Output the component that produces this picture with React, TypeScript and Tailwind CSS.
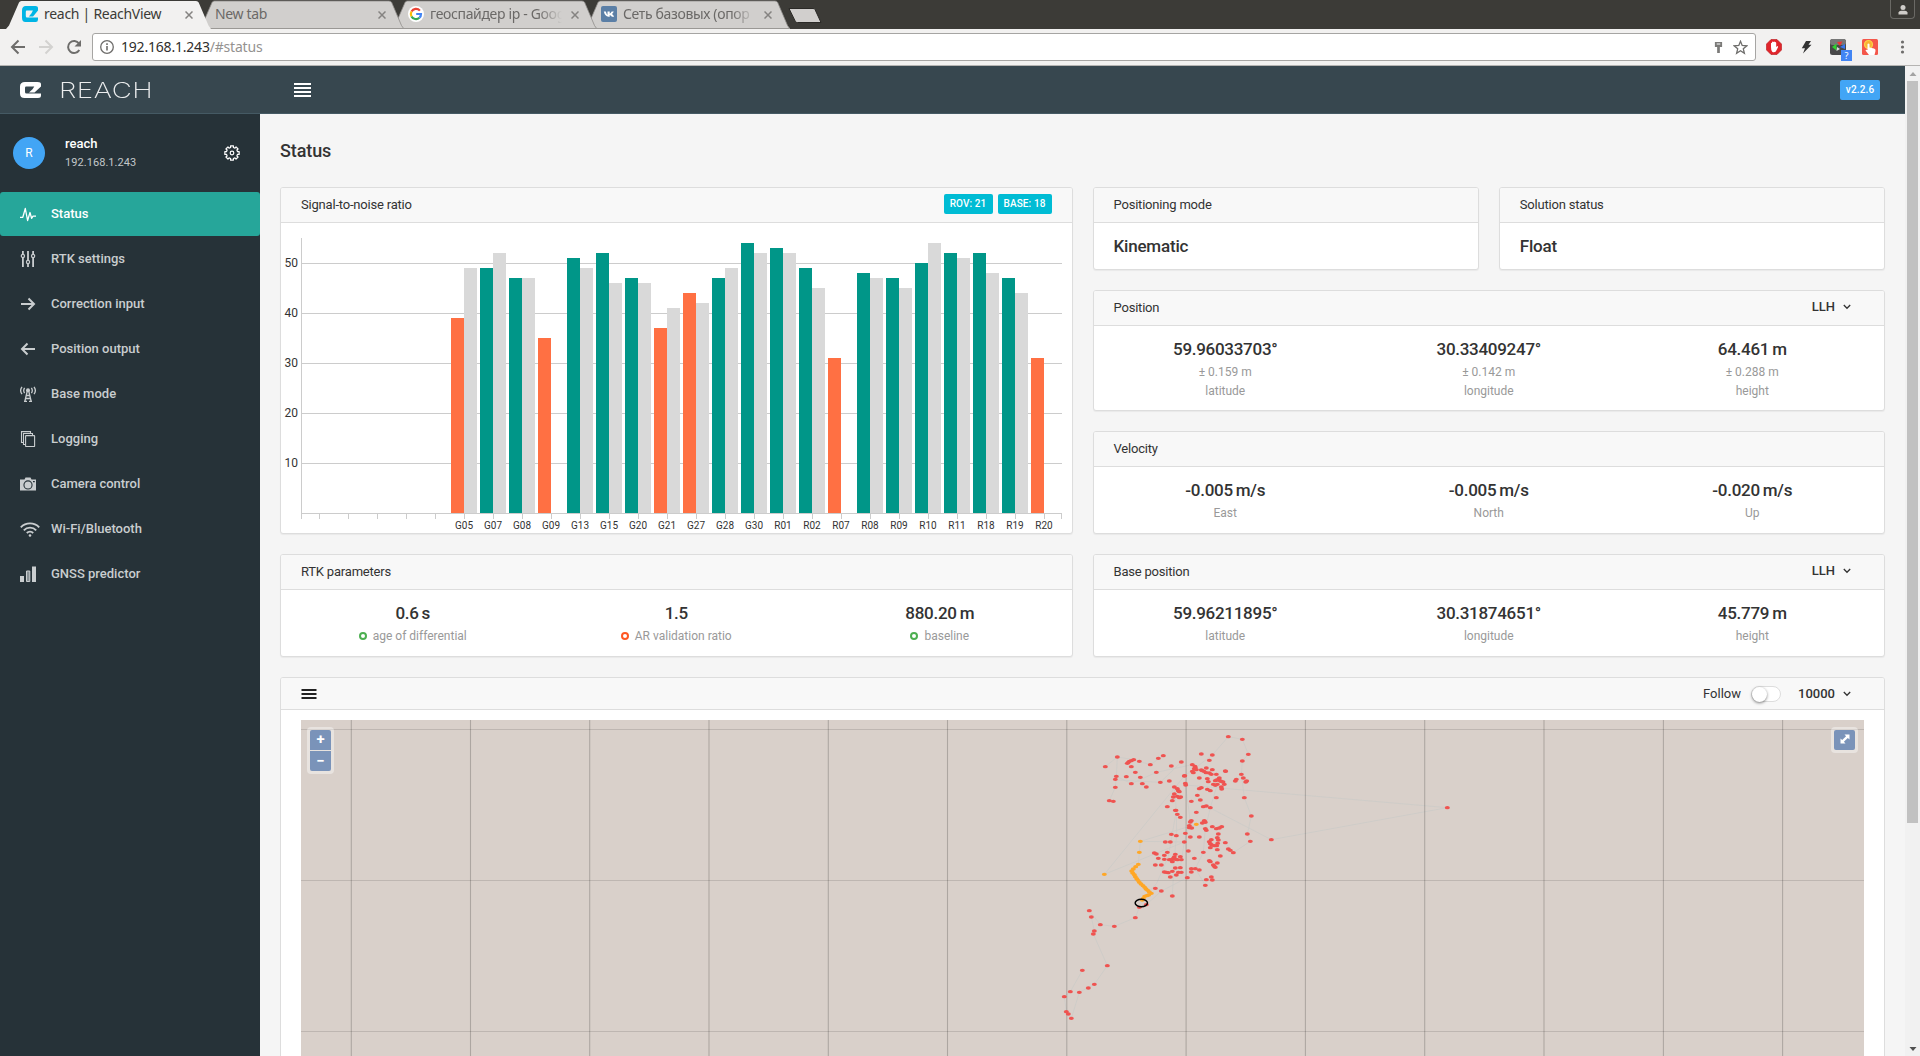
import React from "react";

/* ---------------------------------------------------------------- data */

type Sat = [name: string, rover: number, base?: number];

const SATELLITES: Sat[] = [
  ["G05", 39, 49], ["G07", 49, 52], ["G08", 47, 47], ["G09", 35], ["G13", 51, 49],
  ["G15", 52, 46], ["G20", 47, 46], ["G21", 37, 41], ["G27", 44, 42], ["G28", 47, 49],
  ["G30", 54, 52], ["R01", 53, 52], ["R02", 49, 45], ["R07", 31], ["R08", 48, 47],
  ["R09", 47, 45], ["R10", 50, 54], ["R11", 52, 51], ["R18", 52, 48], ["R19", 47, 44],
  ["R20", 31],
];

/* Single-solution fixes, in thirds of a pixel from the track origin. */
const FIXES =
  "505,110 547,118 565,163 547,183 424,162 457,165 448,181 544,223 550,234 560,243 557,246 529,238 526,243 497,214 496,213 " +
  "172,171 136,200 169,229 166,238 166,262 148,302 160,304 202,190 205,187 208,184 214,182 221,179 238,184 214,200 226,217 " +
  "199,230 241,232 214,251 247,251 259,261 271,194 295,175 310,167 289,217 301,247 328,243 334,198 364,186 373,228 374,227 376,250 377,255 " +
  "397,194 405,199 406,203 403,206 409,209 397,214 400,218 424,210 427,212 432,214 439,204 438,218 448,219 457,209 454,223 469,223 " +
  "418,234 442,236 445,245 478,234 475,239 466,242 470,240 481,243 484,244 489,246 493,253 484,261 485,267 460,253 466,256 472,253 " +
  "418,266 424,263 442,268 451,272 412,286 394,304 421,300 469,293 430,320 439,318 451,323 409,337 " +
  "343,261 352,266 355,272 358,275 343,282 340,291 352,289 358,293 362,291 337,302 322,320 346,331 348,331 352,343 361,352 " +
  "394,362 391,366 388,377 388,383 395,384 427,369 433,362 436,367 434,365 436,386 439,391 457,380 469,386 478,384 485,380 " +
  "376,400 334,403 349,407 391,411 418,411 373,426 316,426 331,426 475,402 472,413 475,420 454,419 448,425 451,431 455,435 " +
  "473,430 470,437 463,437 451,443 472,449 496,428 505,447 511,451 520,458 430,457 481,468 385,453 403,475 448,482 451,485 " +
  "472,489 460,495 463,499 466,502 283,459 289,462 295,475 313,466 313,478 322,457 328,479 346,463 343,471 340,475 334,479 " +
  "337,485 346,478 352,479 361,470 364,479 286,495 304,495 346,504 361,503 313,516 319,517 325,518 337,514 331,531 349,525 " +
  "355,517 364,517 394,506 394,516 406,506 418,510 382,533 439,539 454,531 457,540 436,556 286,565 304,573 337,588 553,293 " +
  "574,348 562,402 571,424 634,419 1162,323 88,632 94,651 121,674 163,679 226,653 238,622 259,614 103,693 100,702 142,797 " +
  "67,811 103,853 85,864 58,877 31,875 13,890 19,935 25,942 34,955";

const FLOATS =
  "409,373 241,424 238,457 133,523 235,493 227,500 220,507 215,513 218,519 223,524 226,530 230,536 234,541 238,547 243,552 " +
  "249,557 254,562 258,567 263,571 268,576 274,580 266,585 260,587 254,589 250,595 247,600";

const FIX_LINES = [
  "505,110 547,118 565,163 547,183 544,223 553,293 574,348 562,402 571,424 520,458 496,428",
  "505,110 457,165 403,206 373,228 133,523",
  "376,255 1162,323 634,419 439,318",
  "133,523 373,426 241,424 409,373",
  "241,424 238,457 235,493",
  "172,171 136,200 M172,171 221,179 271,194 310,167",
  "172,171 169,229 166,262 148,302",
  "169,229 214,251 289,217 397,194",
  "169,240 301,247 364,186",
  "343,261 349,331 350,407 343,471 337,588",
  "376,250 391,366 373,426 361,503",
  "472,253 451,323 436,386 430,457 406,506 436,556",
  "286,565 304,573 382,533",
  "304,573 259,614 238,622 226,653 163,679 121,674 88,632",
  "94,651 103,693 100,702 142,797 103,853 58,877 34,955 19,935 13,890 31,875 67,811",
  "253,590 290,550 325,470 349,331",
];

const parse = (s: string) =>
  s.split(" ").map((p) => p.split(",").map(Number) as [number, number]);

const MERIDIANS = [351.3, 470.5, 589.7, 709, 828.3, 947.5, 1066.8, 1186.1, 1305.4, 1424.7, 1544, 1663.4, 1782.6];
const PARALLELS = [729.5, 880.5, 1031.5];

/* ---------------------------------------------------------- browser */

function Tab({
  title, icon, active, z, fade,
}: { title: string; icon?: React.ReactNode; active?: boolean; z: string; fade?: boolean }) {
  return (
    <div className={`relative -mr-3 h-[29px] w-[205px] shrink-0 ${z}`}>
      <svg className="absolute inset-0" width="205" height="29" viewBox="0 0 205 29">
        <path
          d="M0 29 L3 25.5 L13 2.5 Q13.7 1 15.5 1 H190 Q192 1 192.700 2.500 L202.500 25.500 L205 29 Z"
          fill={active ? "#f2f1f0" : "#d1cfcd"}
          stroke={active ? "none" : "#8f8d8a"}
          strokeWidth="0.8"
        />
        {!active && <path d="M0 28.500H205" stroke="#9a9895" />}
      </svg>
      <div className="relative flex h-7 items-center pr-[13px] pl-4">
        {icon && <span className="mr-[6px] shrink-0">{icon}</span>}
        <span
          className={`mb-px w-0 flex-1 whitespace-nowrap text-[14px] ${active ? "tracking-[-0.28px] text-[#3c3b37]" : "tracking-[-0.35px] text-[#6b6967]"} ${fade ? "[mask-image:linear-gradient(to_right,black_82%,transparent)]" : ""}`}
        >
          {title}
        </span>
        <svg className="mr-[5px] ml-[9px] mt-0.5 shrink-0" width="8" height="8" viewBox="0 0 8 8">
          <path d="M0.500 0.500L7.500 7.500M7.500 0.500L0.500 7.500" stroke="#858381" strokeWidth="1.500" />
        </svg>
      </div>
    </div>
  );
}

const ReachMark = ({ color, w, h }: { color: string; w: number; h: number }) => (
  <svg width={w} height={h} viewBox="0 0 21 16" preserveAspectRatio="none" className="block">
    <path
      d="M5 0H17.500Q21 0 21 2.200V4.500L14.500 10.500H9L12.500 7.300L14.300 4.600H6.200Q5 4.600 5 6V10Q5 11.600 6.500 11.600H21V13.500Q21 16 18 16H4.500Q0 16 0 11.500V4.500Q0 0 5 0Z"
      fill={color}
    />
  </svg>
);

const GoogleMark = () => (
  <svg width="16" height="16" viewBox="0 0 16 16" className="block">
    <circle cx="8" cy="8" r="8" fill="#fff" />
    <g fill="none" strokeWidth="2.200">
      <path d="M11.900 4.600A5.100 5.100 0 0 0 3.500 5.600" stroke="#ea4335" />
      <path d="M3.500 5.600A5.100 5.100 0 0 0 3.500 10.400" stroke="#fbbc05" />
      <path d="M3.500 10.400A5.100 5.100 0 0 0 11.400 11.800" stroke="#34a853" />
      <path d="M11.400 11.800A5 5 0 0 0 13 8H8.200" stroke="#4285f4" />
    </g>
  </svg>
);

const VkMark = () => (
  <svg width="16" height="16" viewBox="0 0 16 16" className="block">
    <rect width="16" height="16" rx="2" fill="#5b7fa6" />
    <path
      d="M2.800 5.500H4.800Q5.500 8 6.500 9V5.500H8.700V7.700Q9.900 7 10.700 5.500H12.700Q12.200 7 10.900 8.100Q12.300 9 13.100 10.700H10.900Q10.200 9.500 8.700 9V10.700H7.500Q4 10.500 2.800 5.500Z"
      fill="#fff"
    />
  </svg>
);

function BrowserChrome() {
  return (
    <div className="shrink-0 font-['Noto_Sans','Open_Sans',sans-serif]">
      <div className="flex h-[29px] bg-[#3c3b37] pl-[6px]">
        <Tab z="z-40" active title="reach | ReachView" icon={<ReachMark color="#00b5e5" w={16} h={16} />} />
        <Tab z="z-30" title="New tab" />
        <Tab z="z-20" fade title="геоспайдер ip - Goog" icon={<GoogleMark />} />
        <Tab z="z-10" fade title="Сеть базовых (опор" icon={<VkMark />} />
        <svg className="mt-[7px] ml-[10px]" width="34" height="17" viewBox="0 0 34 17">
          <path d="M1 1.500H25Q26.500 1.500 27 2.500L33 15.500H9.500Q8 15.500 7.400 14.500Z" fill="#d1cfcd" stroke="#2b2a27" />
        </svg>
        <div className="mr-[5px] ml-auto flex h-[19px] w-[25px] justify-center rounded-b-[4px] border border-t-0 border-[#6a6965] bg-[#3a3935] pt-[4px]">
          <svg width="12" height="12" viewBox="0 0 12 12">
            <circle cx="6" cy="3.500" r="2.500" fill="#cfcdca" />
            <path d="M1.500 10.500V8.500Q2 7 4 6.800H8Q10 7 10.500 8.500V10.500Z" fill="#cfcdca" />
          </svg>
        </div>
      </div>
      <div className="flex h-[37px] items-center border-b border-[#b5b4b2] bg-[#f2f1f0]">
        <svg className="ml-[10px]" width="74" height="16" viewBox="0 0 74 16" fill="none" strokeWidth="2">
          <path d="M15 8H2.500M8.500 1.500L2 8L8.500 14.500" stroke="#6e6d6b" />
          <path d="M29 8H41.500M35.500 1.500L42 8L35.500 14.500" stroke="#d3d2d0" />
          <path d="M69.300 11A6 6 0 1 1 69 4.500L70 6" stroke="#6e6d6b" />
          <path d="M71 1V7.500H64.500Z" fill="#6e6d6b" />
        </svg>
        <div className="ml-2 flex h-7 w-[1664px] items-center rounded-[3px] border border-[#a6a5a3] bg-white pl-[7px] text-[14px] tracking-[-0.2px]">
          <svg width="14" height="14" viewBox="0 0 14 14">
            <circle cx="7" cy="7" r="6.300" fill="none" stroke="#6e6d6b" strokeWidth="1.300" />
            <path d="M7 6V10.500M7 3.300V5" stroke="#6e6d6b" strokeWidth="1.600" />
          </svg>
          <span className="mb-px ml-[7px] text-[#2f2e2c]">192.168.1.243</span>
          <span className="mb-px text-[#949290]">/#status</span>
          <svg className="ml-auto" width="9" height="13" viewBox="0 0 10 14">
            <path d="M1 1H9V6.500H6.500V13H3.500V6.500H1ZM3 2.500V3.700H7V2.500Z" fill="#7b7a78" fillRule="evenodd" />
          </svg>
          <svg className="mr-[7px] ml-[10px]" width="15" height="15" viewBox="0 0 15 15">
            <path
              d="M7.500 1.300L9.200 5.500L13.800 5.800L10.300 8.800L11.400 13.300L7.500 10.800L3.600 13.300L4.700 8.800L1.200 5.800L5.800 5.500Z"
              fill="none" stroke="#6e6d6b" strokeWidth="1.300"
            />
          </svg>
        </div>
        <svg className="ml-[10px]" width="16" height="16" viewBox="0 0 16 16">
          <path d="M5 0.500H11L15.500 5V11L11 15.500H5L0.500 11V5Z" fill="#e0252b" stroke="#b8141a" strokeWidth="0.600" />
          <path d="M5 8V4.500Q5 3.500 6 4V3Q6.800 2 7.500 3Q8.500 2 9 3.200Q10 2.800 10.200 4V8L11.500 7Q12.500 7.200 12 8.200L9.800 12.500Q8 14 6.200 12.800Q5 11.500 5 8Z" fill="#fff" />
        </svg>
        <svg className="ml-[17px]" width="14" height="14" viewBox="0 0 14 14">
          <path d="M7 1H12L9.500 4.800H12.500L4 13.500L6 8.300H2.800Z" fill="#333" />
        </svg>
        <div className="relative ml-[17px] h-4 w-4">
          <svg width="22" height="22" viewBox="0 0 22 22" className="absolute top-0 left-0">
            <rect width="16" height="16" rx="2.500" fill="#484848" />
            <rect width="16" height="6" rx="2.500" fill="#777" />
            <path d="M2 8L6.500 4.500V11.500Z" fill="#2ed12e" />
            <path d="M7 3L12.500 2.500L10 7Z" fill="#e33" />
            <path d="M10 8L15 5V10Z" fill="#3876ee" />
            <path d="M7 8L10 10L6.500 12Z" fill="#ddd" />
          </svg>
          <span className="absolute top-[11px] left-[11px] flex h-[11px] w-[11px] items-center justify-center bg-[#4285f4] text-[9px] leading-none text-white">?</span>
        </div>
        <svg className="ml-4" width="16" height="16" viewBox="0 0 16 16">
          <rect width="16" height="16" rx="1.500" fill="#f4574a" />
          <circle cx="6.500" cy="5.500" r="4" fill="#f9b233" stroke="#fbd34a" strokeWidth="1.200" />
          <path d="M5.500 5Q6.500 4 7.500 5V8.500L12 9.500Q14 10 13.500 12L12.500 16H7L3.500 11.500Q4 10.300 5.500 11Z" fill="#fff" />
        </svg>
        <svg className="ml-[22px]" width="5" height="14" viewBox="0 0 5 14" fill="#6e6d6b">
          <circle cx="2.500" cy="2" r="1.600" /><circle cx="2.500" cy="7" r="1.600" /><circle cx="2.500" cy="12" r="1.600" />
        </svg>
      </div>
    </div>
  );
}

/* ---------------------------------------------------------- sidebar */

const gearPath = (() => {
  const pts: string[] = [];
  for (let i = 0; i < 8; i++) {
    const a = (i * Math.PI) / 4;
    for (const [da, r] of [[-0.24, 5.700], [-0.2, 7.300], [0.2, 7.300], [0.24, 5.700]]) {
      pts.push(`${(8 + r * Math.cos(a + da)).toFixed(2)} ${(8 + r * Math.sin(a + da)).toFixed(2)}`);
    }
  }
  return `M${pts.join("L")}Z`;
})();

const icons: Record<string, React.ReactNode> = {
  pulse: <path d="M0 11.300H2.800L5.300 2.500L7.600 14.500L10 6.500L11.600 12.300L13 10.200H16" strokeWidth="1.300" strokeLinejoin="round" />,
  sliders: (
    <g strokeWidth="1.800">
      <path d="M2.900 0V3M2.900 7V16M8 0V9M8 13V16M13.100 0V3M13.100 7V16" />
      <circle cx="2.900" cy="5" r="1.600" strokeWidth="1.200" />
      <circle cx="8" cy="11" r="1.600" strokeWidth="1.200" />
      <circle cx="13.100" cy="5" r="1.600" strokeWidth="1.200" />
    </g>
  ),
  right: <path d="M1 8H14M8.500 2.500L14 8L8.500 13.500" strokeWidth="2" />,
  left: <path d="M15 8H2M7.500 2.500L2 8L7.500 13.500" strokeWidth="2" />,
  tower: (
    <g strokeWidth="1.300">
      <path d="M2 0.800Q-0.700 4.500 2 8.200M4.600 1.800Q2.800 4.500 4.600 7.200M14 0.800Q16.700 4.500 14 8.200M11.400 1.800Q13.200 4.500 11.400 7.200" />
      <circle cx="8" cy="4.300" r="2" fill="currentColor" stroke="none" />
      <path d="M7.300 5L4.800 15.500M8.700 5L11.200 15.500M6.300 9.500H9.700M5.500 12.500H10.500M4 15.500H7M9 15.500H12" />
    </g>
  ),
  copy: (
    <g strokeWidth="1.100">
      <path d="M3.500 11.500H1.500V0.600H10.500V2.500M5.500 13.500H3.500V2.500H12.500V4.500" />
      <rect x="5.600" y="4.600" width="9" height="10.900" rx="0.500" />
    </g>
  ),
  camera: (
    <g fill="currentColor" stroke="none">
      <path
        fillRule="evenodd"
        d="M0 3.500H4.500L5.500 1.500H10.500L11.500 3.500H16V14.500H0ZM8 4.300A4.600 4.600 0 1 0 8 13.500A4.600 4.600 0 1 0 8 4.300ZM13 5V6.200H14.800V5Z"
      />
      <circle cx="8" cy="8.900" r="3.500" />
    </g>
  ),
  wifi: (
    <g strokeWidth="1.900">
      <path d="M0.800 6.300A12.800 12.800 0 0 1 19.200 6.300M3.800 9.300A8.600 8.600 0 0 1 16.200 9.300M6.800 12A4.500 4.500 0 0 1 13.200 12" />
      <circle cx="10" cy="14.500" r="1.300" fill="currentColor" stroke="none" />
    </g>
  ),
  bars: (
    <g stroke="none" fill="currentColor">
      <path d="M0 10H4V16H0ZM12 0.500H16V16H12Z" />
      <path d="M6.500 5H9.800V15.500H6.500Z" fill="#868f93" stroke="currentColor" strokeWidth="1" />
    </g>
  ),
};

const NAV: [icon: string, label: string][] = [
  ["pulse", "Status"], ["sliders", "RTK settings"], ["right", "Correction input"], ["left", "Position output"],
  ["tower", "Base mode"], ["copy", "Logging"], ["camera", "Camera control"], ["wifi", "Wi-Fi/Bluetooth"],
  ["bars", "GNSS predictor"],
];

function Sidebar() {
  return (
    <aside className="w-[260px] shrink-0 bg-[#263238]">
      <div className="flex h-[78px] items-center pr-5 pl-[13px]">
        <div className="flex h-8 w-8 items-center justify-center rounded-full bg-[#42a5f5] text-[12px] text-white">R</div>
        <div className="ml-5 flex-1">
          <div className="text-[13px] leading-[19px] font-medium text-white">reach</div>
          <div className="text-[11px] leading-[20px] tracking-[0.06px] text-[#c3c8ca]">192.168.1.243</div>
        </div>
        <svg width="16" height="16" viewBox="0 0 16 16" fill="none" stroke="#fff">
          <path d={gearPath} strokeWidth="1.200" strokeLinejoin="round" />
          <circle cx="8" cy="8" r="1.800" strokeWidth="1.200" />
        </svg>
      </div>
      <nav className="flex flex-col gap-px">
        {NAV.map(([icon, label], i) => (
          <a
            key={label}
            className={`flex h-11 items-center pl-5 text-[13px] font-medium ${i === 0 ? "rounded-[3px] bg-[#26a69a] text-white" : "text-[#c9cdcf]"}`}
          >
            <span className="w-[31px]">
              <svg
                width={icon === "wifi" ? 20 : 16} height="16"
                viewBox={icon === "wifi" ? "0 0 20 16" : "0 0 16 16"}
                fill="none" stroke="currentColor"
              >
                {icons[icon]}
              </svg>
            </span>
            {label}
          </a>
        ))}
      </nav>
    </aside>
  );
}

/* ------------------------------------------------------------ cards */

const Chevron = () => (
  <svg width="8" height="6" viewBox="0 0 8 6" className="ml-2">
    <path d="M0.800 1L4 4.300L7.200 1" fill="none" stroke="#333" strokeWidth="1.300" />
  </svg>
);

function Card({ title, right, className = "", children }: {
  title: string; right?: React.ReactNode; className?: string; children: React.ReactNode;
}) {
  return (
    <section className={`flex flex-col rounded-[3px] border border-[#ddd] bg-white shadow-[0_1px_1px_rgba(0,0,0,0.05)] ${className}`}>
      <header className="flex h-[35px] shrink-0 items-center justify-between rounded-t-[2px] border-b border-[#ddd] bg-[#f8f8f8] px-5 text-[13px]">
        <span className="tracking-[-0.2px]">{title}</span>
        {right}
      </header>
      {children}
    </section>
  );
}

type Metric = { value: string; label: string; error?: string; dot?: string };

const Metrics = ({ items }: { items: Metric[] }) => (
  <div className="grid grid-cols-3 pt-[11px] text-center text-[12px] text-[#999]">
    {items.map((m) => (
      <div key={m.label}>
        <div className="h-6 text-[17px] leading-6 font-medium tracking-[-0.28px] text-[#333] [word-spacing:-1px]">{m.value}</div>
        {m.error && <div className="h-[21px] leading-[22px]">{m.error}</div>}
        <div className={`flex items-center justify-center ${m.error ? "h-[18px]" : "h-[22px]"}`}>
          {m.dot && <i className={`mr-[6px] h-2 w-2 rounded-full border-2 bg-white ${m.dot}`} />}
          {m.label}
        </div>
      </div>
    ))}
  </div>
);

const Llh = () => (
  <span className="mr-[13px] mb-0.5 flex items-center text-[13px] font-medium">LLH<Chevron /></span>
);

function SnrChart() {
  return (
    <svg width="791" height="310" viewBox="281 223 791 310" className="block" shapeRendering="crispEdges">
      <g stroke="#ccc">
        {[10, 20, 30, 40, 50].map((v) => <path key={v} d={`M301 ${513.5 - v * 5}H1062`} />)}
        <path d="M301.500 238V519M301 513.500H1062M1061.500 513V519" fill="none" />
        {Array.from({ length: 26 }, (_, i) => <path key={i} d={`M${319.5 + 29 * i} 513V519`} />)}
      </g>
      {SATELLITES.map(([name, rover, base], i) => {
        const x = 451 + 29 * i;
        return (
          <g key={name}>
            <rect x={x} y={513 - rover * 5} width="13" height={rover * 5} fill={rover < 45 ? "#ff7043" : "#009688"} />
            {base && <rect x={x + 13} y={513 - base * 5} width="13" height={base * 5} fill="#d9d9d9" />}
          </g>
        );
      })}
      <g fill="#333" className="text-[12px]" textAnchor="end">
        {[10, 20, 30, 40, 50].map((v) => <text key={v} x="298" y={517 - v * 5}>{v}</text>)}
      </g>
      <g fill="#333" className="text-[10px]" textAnchor="middle">
        {SATELLITES.map(([name], i) => <text key={name} x={464 + 29 * i} y="529">{name}</text>)}
      </g>
    </svg>
  );
}

function TrackMap() {
  return (
    <div className="relative mx-5 mt-[10px] h-[346px] overflow-hidden bg-[#d9d0ca]">
      <svg width="1563" height="346" viewBox="301 720 1563 346" className="block">
        <g fill="none" stroke="#cdcbc8" strokeWidth="1" transform="translate(1060 700) scale(0.33333)" >
          {FIX_LINES.map((l) => <path key={l} d={`M${l}`} strokeWidth="2.500" />)}
        </g>
        <g stroke="rgba(0,0,0,0.2)">
          {MERIDIANS.map((x) => <path key={x} d={`M${x} 720V1066`} strokeWidth="1.100" />)}
          {PARALLELS.map((y) => <path key={y} d={`M301 ${y}H1864`} stroke="rgba(0,0,0,0.12)" />)}
        </g>
        <g transform="translate(1060 700) scale(0.33333)">
          {parse(FIXES).map(([x, y], i) => <ellipse key={i} cx={x} cy={y} rx="7.500" ry="5" fill="#ef5350" />)}
          {parse(FLOATS).map(([x, y], i) => <ellipse key={i} cx={x} cy={y} rx="7.500" ry="5" fill="#ffa726" />)}
          <ellipse cx="244" cy="609" rx="18.500" ry="11.500" fill="none" stroke="#000" strokeWidth="4.500" />
        </g>
      </svg>
      <div className="absolute top-[7px] left-[6px] flex flex-col gap-px rounded-[4px] bg-white/40 p-[3px]">
        {["+", "−"].map((s, i) => (
          <button
            key={s}
            className={`flex h-5 w-[21px] items-center justify-center bg-[#7a93b9] text-[15px] leading-none font-bold text-white ${i ? "rounded-b-[2px]" : "rounded-t-[2px] pb-0.5"}`}
          >
            {s}
          </button>
        ))}
      </div>
      <div className="absolute top-[7px] right-[6px] rounded-[4px] bg-white/40 p-[3px]">
        <div className="flex h-5 w-[21px] items-center justify-center rounded-[2px] bg-[#7a93b9]">
          <svg width="10" height="10" viewBox="0 0 10 10" className="mb-0.5">
            <path d="M4.500 0.500H9.500V5.500L7.800 3.900L3.900 7.800L5.500 9.500H0.500V4.500L2.200 6.100L6.100 2.200Z" fill="#fff" />
          </svg>
        </div>
      </div>
    </div>
  );
}

/* ------------------------------------------------------------- page */

function Page() {
  return (
    <main className="flex w-[1645px] shrink-0 flex-col bg-[#f5f5f5] px-5">
      <h1 className="flex h-[73px] shrink-0 items-center pb-px text-[18px] font-medium tracking-[-0.1px]">Status</h1>
      <div className="grid shrink-0 grid-cols-2 gap-5">
        <Card
          title="Signal-to-noise ratio"
          className="h-[347px]"
          right={
            <span className="mb-[3px] flex gap-[5px] text-[10px] font-medium tracking-[0.1px] text-white">
              <span className="flex h-5 w-[49px] items-center justify-center rounded-[2px] bg-[#00bcd4]">ROV: 21</span>
              <span className="flex h-5 w-[54px] items-center justify-center rounded-[2px] bg-[#00bcd4]">BASE: 18</span>
            </span>
          }
        >
          <SnrChart />
        </Card>
        <div className="flex flex-col gap-5">
          <div className="grid grid-cols-2 gap-5">
            <Card title="Positioning mode" className="h-[83px]">
              <div className="flex flex-1 items-center px-5 pt-0.5 text-[17px] font-medium tracking-[-0.2px]">Kinematic</div>
            </Card>
            <Card title="Solution status" className="h-[83px]">
              <div className="flex flex-1 items-center px-5 pt-0.5 text-[17px] font-medium tracking-[-0.2px]">Float</div>
            </Card>
          </div>
          <Card title="Position" className="h-[121px]" right={<Llh />}>
            <Metrics
              items={[
                { value: "59.96033703°", error: "± 0.159 m", label: "latitude" },
                { value: "30.33409247°", error: "± 0.142 m", label: "longitude" },
                { value: "64.461 m", error: "± 0.288 m", label: "height" },
              ]}
            />
          </Card>
          <Card title="Velocity" className="h-[103px]">
            <Metrics
              items={[
                { value: "-0.005 m/s", label: "East" },
                { value: "-0.005 m/s", label: "North" },
                { value: "-0.020 m/s", label: "Up" },
              ]}
            />
          </Card>
        </div>
        <Card title="RTK parameters" className="h-[103px]">
          <Metrics
            items={[
              { value: "0.6 s", label: "age of differential", dot: "border-[#4caf50]" },
              { value: "1.5", label: "AR validation ratio", dot: "border-[#ff5722]" },
              { value: "880.20 m", label: "baseline", dot: "border-[#4caf50]" },
            ]}
          />
        </Card>
        <Card title="Base position" className="h-[103px]" right={<Llh />}>
          <Metrics
            items={[
              { value: "59.96211895°", label: "latitude" },
              { value: "30.31874651°", label: "longitude" },
              { value: "45.779 m", label: "height" },
            ]}
          />
        </Card>
      </div>
      <section className="mt-5 h-[420px] shrink-0 rounded-[3px] border border-[#ddd] bg-white">
        <header className="flex h-8 items-center rounded-t-[2px] border-b border-[#ddd] bg-[#f8f8f8] pr-[33px] pl-5 text-[13px]">
          <svg width="16" height="10" viewBox="0 0 16 10" className="mr-auto" fill="#222">
            <path d="M0.500 0H15.500V2H0.500ZM0.500 4H15.500V6H0.500ZM0.500 8H15.500V10H0.500Z" />
          </svg>
          <span>Follow</span>
          <span className="mr-[17px] ml-[10px] h-4 w-[30px] rounded-full border border-[#ddd] bg-white">
            <span className="block h-[15px] w-[15px] rounded-full bg-white shadow-[0_1px_3px_rgba(0,0,0,0.5)]" />
          </span>
          <span className="font-medium">10000</span>
          <Chevron />
        </header>
        <TrackMap />
      </section>
    </main>
  );
}

function Scrollbar() {
  return (
    <div className="flex w-[15px] shrink-0 flex-col items-center bg-[#f1f1f1]">
      <svg width="8" height="15" viewBox="0 0 8 15"><path d="M0.500 10L4 6L7.500 10Z" fill="#a3a3a3" /></svg>
      <div className="h-[742px] w-[11px] bg-[#c1c1c1]" />
      <svg width="8" height="15" viewBox="0 0 8 15" className="mt-auto"><path d="M0.500 6L4 10L7.500 6Z" fill="#505050" /></svg>
    </div>
  );
}

export default function App() {
  return (
    <div className="flex h-[1056px] w-[1920px] flex-col overflow-hidden bg-[#f5f5f5] font-[Roboto,sans-serif] text-[#333]">
      <BrowserChrome />
      <div className="flex min-h-0 flex-1">
        <div className="flex w-[1905px] shrink-0 flex-col">
          <header className="flex h-12 shrink-0 items-center border-b border-[#455a64] bg-[#37474f] pl-5">
            <ReachMark color="#fff" w={21} h={16} />
            <span className="mt-px ml-[18px] w-[92px] origin-left scale-x-[1.26] font-['Inter',sans-serif] text-[22px] leading-none font-extralight tracking-[0.4px] text-white/90">
              REACH
            </span>
            <svg width="17" height="14" viewBox="0 0 17 14" className="ml-[143px]" fill="#fff">
              <path d="M0 0H17V2H0ZM0 4H17V6H0ZM0 8H17V10H0ZM0 12H17V14H0Z" />
            </svg>
            <span className="mr-[25px] ml-auto flex h-5 w-10 items-center justify-center rounded-[2px] bg-[#42a5f5] text-[10px] font-medium tracking-[0.15px] text-white">
              v2.2.6
            </span>
          </header>
          <div className="flex min-h-0 flex-1">
            <Sidebar />
            <Page />
          </div>
        </div>
        <Scrollbar />
      </div>
    </div>
  );
}
